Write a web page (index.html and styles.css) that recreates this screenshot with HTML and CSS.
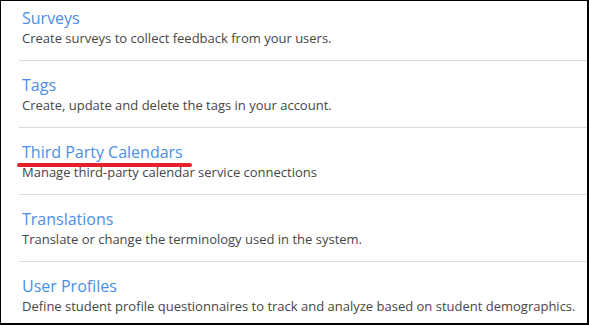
FILE: index.html
```html
<!DOCTYPE html>
<html lang="en">
  <head>
    <meta charset="UTF-8" />
    <title>Settings</title>
    <link rel="stylesheet" href="styles.css">
  </head>
  <body>
    <div class="panel">
      <ul class="settings-list">
        <li class="setting">
          <a class="setting-title" href="#">Surveys</a>
          <div class="setting-desc">Create surveys to collect feedback from your users.</div>
        </li>
        <li class="setting">
          <a class="setting-title" href="#">Tags</a>
          <div class="setting-desc">Create, update and delete the tags in your account.</div>
        </li>
        <li class="setting">
          <a class="setting-title marked" href="#">Third Party Calendars</a>
          <div class="setting-desc">Manage third-party calendar service connections</div>
        </li>
        <li class="setting">
          <a class="setting-title" href="#">Translations</a>
          <div class="setting-desc">Translate or change the terminology used in the system.</div>
        </li>
        <li class="setting">
          <a class="setting-title" href="#">User Profiles</a>
          <div class="setting-desc">Define student profile questionnaires to track and analyze based on student demographics.</div>
        </li>
      </ul>
    </div>
  </body>
</html>
```

FILE: styles.css
```css
body {
  font-family: "Open Sans", "Noto Sans", sans-serif;
  margin: 0;
  padding: 0;
  background: white;
}
.panel {
  width: 589px;
  height: 325px;
  box-sizing: border-box;
  border: solid #000;
  border-width: 1px 2px 2px 1px;
  overflow: hidden;
  background: white;
}
.settings-list {
  list-style: none;
  margin: 0 0 0 18px;
  padding: 0;
}
.setting {
  display: flex;
  flex-direction: column;
  align-items: flex-start;
  padding: 14px 0 13px 3px;
  border-bottom: 1px solid #dcdcdc;
}
.setting:first-child {
  padding-top: 7px;
}
.setting:last-child {
  border-bottom: none;
}
.setting-title {
  position: relative;
  font-size: 16px;
  line-height: 21px;
  color: #4a8fe7;
  text-decoration: none;
}
.setting-desc {
  font-size: 13px;
  line-height: 18px;
  color: #464646;
  white-space: nowrap;
}
/* red annotation stroke */
.marked::after {
  content: "";
  position: absolute;
  left: -5px;
  right: -9px;
  bottom: -4px;
  height: 4px;
  border-radius: 2px;
  background: #e5202b;
}
```
